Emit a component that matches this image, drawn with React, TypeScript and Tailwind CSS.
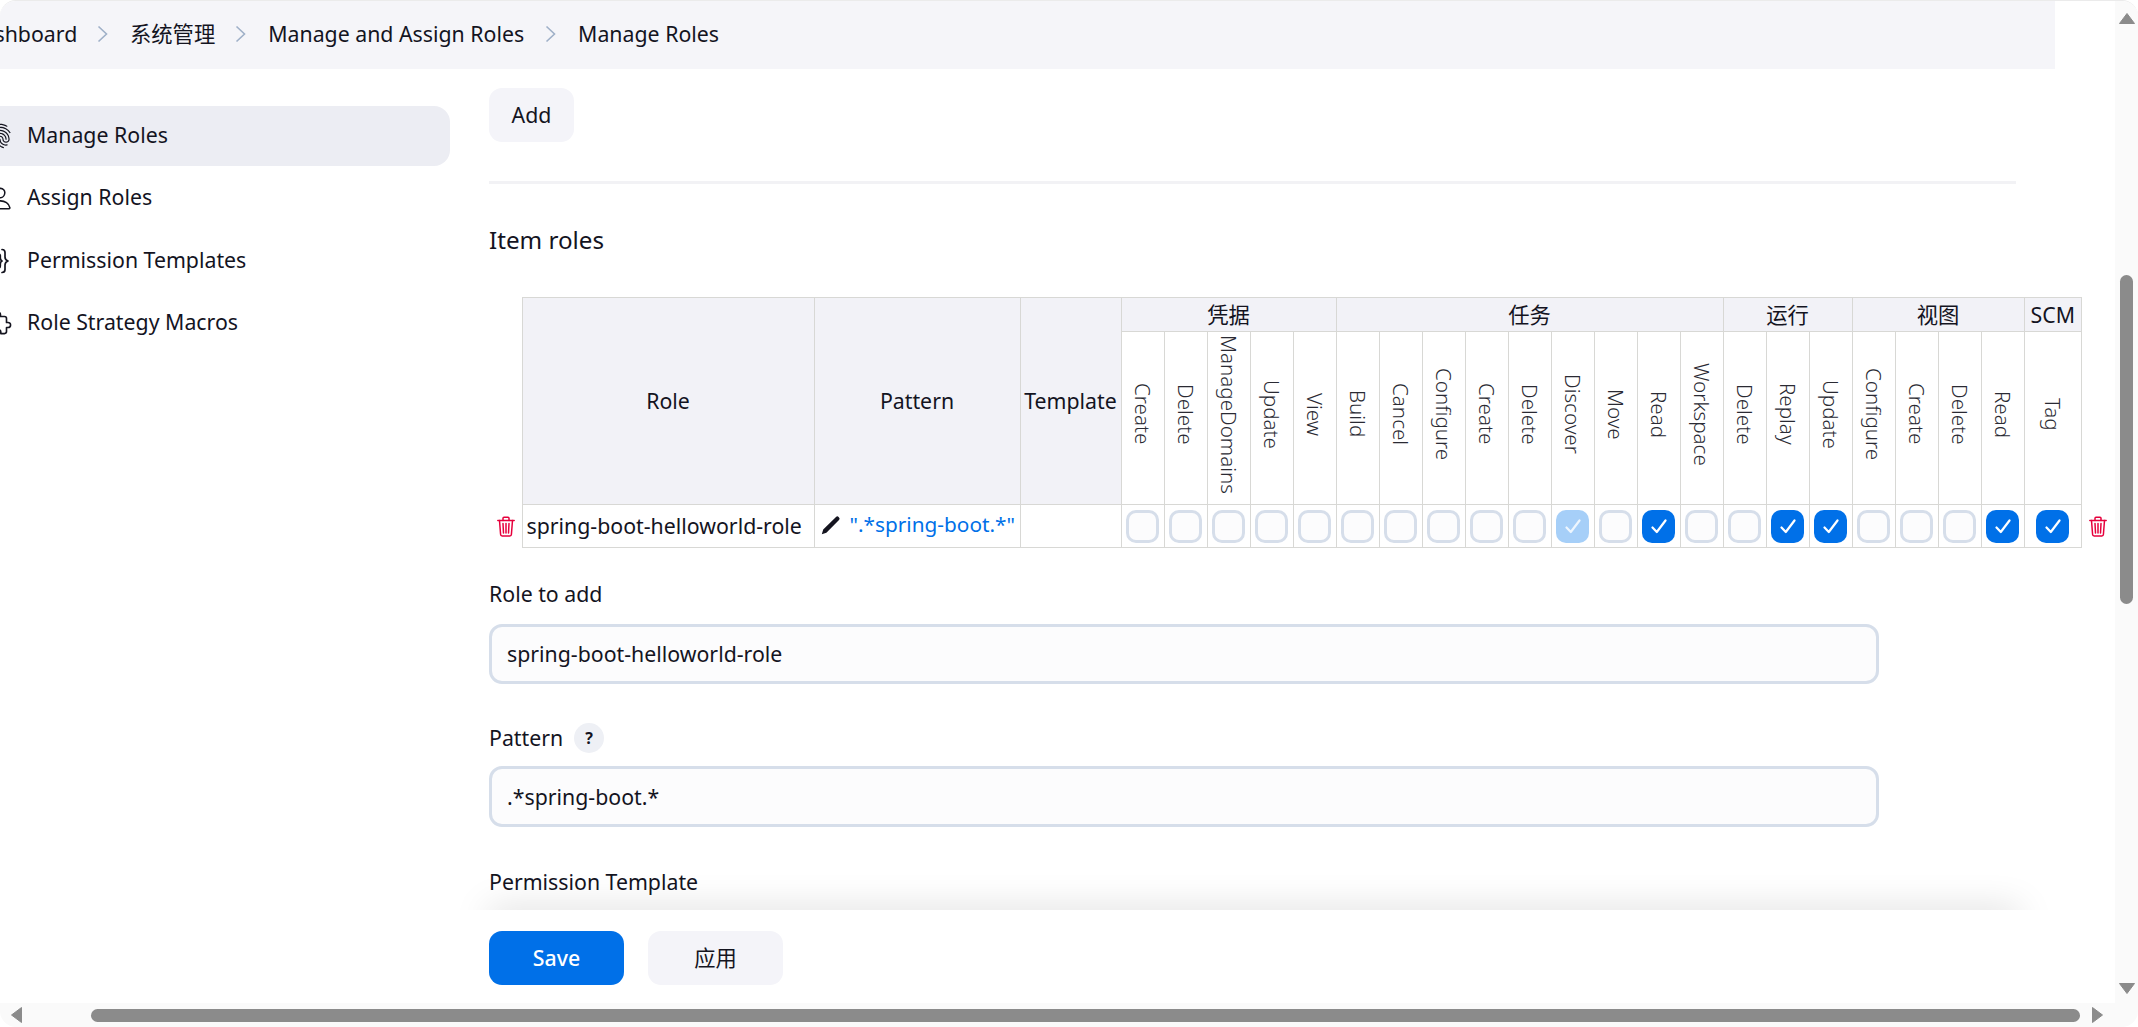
import React from "react";
import { IoFingerPrintOutline, IoPersonOutline, IoExtensionPuzzleOutline } from "react-icons/io5";

const font = "font-['Noto_Sans','Noto_Sans_CJK_SC',sans-serif]";

type Perm = { label: string; state?: "on" | "dim" };
const groups: { name: string; perms: Perm[] }[] = [
  { name: "凭据", perms: [{ label: "Create" }, { label: "Delete" }, { label: "ManageDomains" }, { label: "Update" }, { label: "View" }] },
  {
    name: "任务",
    perms: [
      { label: "Build" }, { label: "Cancel" }, { label: "Configure" }, { label: "Create" }, { label: "Delete" },
      { label: "Discover", state: "dim" }, { label: "Move" }, { label: "Read", state: "on" }, { label: "Workspace" },
    ],
  },
  { name: "运行", perms: [{ label: "Delete" }, { label: "Replay", state: "on" }, { label: "Update", state: "on" }] },
  { name: "视图", perms: [{ label: "Configure" }, { label: "Create" }, { label: "Delete" }, { label: "Read", state: "on" }] },
  { name: "SCM", perms: [{ label: "Tag", state: "on" }] },
];
const allPerms = groups.flatMap((g) => g.perms);

function Check({ state }: { state?: "on" | "dim" }) {
  if (!state) return <div className="w-[33px] h-[33px] mx-auto rounded-[10px] border-[3px] border-[#d6deea] bg-[#fcfcfd]" />;
  return (
    <div className={`w-[33px] h-[33px] mx-auto rounded-[10px] flex items-center justify-center ${state === "on" ? "bg-[#0070e8]" : "bg-[#a6cff8]"}`}>
      <svg width="16" height="15" viewBox="0 0 16 15" fill="none">
        <path d="M1.5 8.5 L5.8 13 L14.5 1.5" stroke="white" strokeOpacity={state === "on" ? 1 : 0.8} strokeWidth="2.2" strokeLinecap="round" strokeLinejoin="round" />
      </svg>
    </div>
  );
}

function Chevron() {
  return (
    <svg width="11" height="18" viewBox="0 0 11 18" fill="none" className="shrink-0">
      <path d="M1.5 1.5 L9.5 9 L1.5 16.5" stroke="#9fb0c8" strokeWidth="1.6" />
    </svg>
  );
}

function Trash({ className }: { className: string }) {
  return (
    <svg width="18" height="21" viewBox="0 0 18 21" fill="none" stroke="#e6003c" strokeWidth="1.5" strokeLinecap="round" strokeLinejoin="round" className={className}>
      <path d="M0.8 4.5H17.2" />
      <path d="M6 4.5V2.2a1 1 0 0 1 1-1h4a1 1 0 0 1 1 1V4.5" />
      <path d="M2.5 4.5L3.6 18.5a1.5 1.5 0 0 0 1.5 1.4h7.8a1.5 1.5 0 0 0 1.5-1.4L15.5 4.5" />
      <path d="M6 7.5L6.5 17M9 7.5V17M12 7.5L11.5 17" />
    </svg>
  );
}

function Pencil() {
  return (
    <svg width="20" height="20" viewBox="0 0 20 20" className="shrink-0">
      <path d="M0.8 19.2L2.2 14.6L15 2a1.8 1.8 0 0 1 2.6 0l0.4 0.4a1.8 1.8 0 0 1 0 2.6L5.4 17.8Z" fill="#14141f" />
    </svg>
  );
}

function BracesIcon() {
  return (
    <svg width="26" height="26" viewBox="0 0 26 26" fill="none" stroke="currentColor" strokeWidth="1.7" strokeLinecap="round" strokeLinejoin="round" className="ml-[-5px] shrink-0">
      <path d="M17 1.5c2.2 0 3 1 3 3V9c0 2 1 3.3 3 4-2 .7-3 2-3 4v4.5c0 2-.8 3-3 3" />
      <path d="M13.5 6c1.2 0 1.8.7 1.8 2v2c0 1.300.5 2.400 1.700 3-1.200.6-1.700 1.700-1.700 3v2c0 1.300-.6 2-1.800 2" />
    </svg>
  );
}

function SideItem({ icon, label, active }: { icon: React.ReactNode; label: string; active?: boolean }) {
  return (
    <div className={`h-[60px] ml-[-14px] flex items-center gap-[13px] rounded-r-[16px] text-[21.3px] ${active ? "bg-[#ecedf3]" : ""}`}>
      <span className="w-[28px] h-[28px] shrink-0 flex items-center justify-center">{icon}</span>
      <span className="pb-[2px]">{label}</span>
    </div>
  );
}

function Input({ value, h }: { value: string; h: string }) {
  return (
    <div className={`w-[1390px] ${h} rounded-[13px] border-[3px] border-[#d6deea] bg-[#fcfcfd] flex items-center pl-[15px] text-[21.3px]`}>
      {value}
    </div>
  );
}

export default function App() {
  return (
    <div className={`${font} w-[2138px] h-[1027px] flex flex-col overflow-hidden rounded-[16px] border-t border-[#ebebeb] bg-white text-[#14141f]`}>
      <div className="flex-1 min-h-0 flex">
        {/* page viewport */}
        <div className="w-[2115px] h-full flex flex-col overflow-hidden">
          <div className="w-[2055px] h-[68px] shrink-0 pb-[2px] bg-[#f5f5f9] flex items-center text-[21.3px] whitespace-nowrap">
            <span className="ml-[-33px] w-[110px] shrink-0 text-right">Dashboard</span>
            <span className="ml-[20px]"><Chevron /></span>
            <span className="ml-[22px]">系统管理</span>
            <span className="ml-[20px]"><Chevron /></span>
            <span className="ml-[22px]">Manage and Assign Roles</span>
            <span className="ml-[21px]"><Chevron /></span>
            <span className="ml-[22px]">Manage Roles</span>
          </div>

          <div className="flex-1 min-h-0 flex overflow-hidden">
            <div className="w-[450px] shrink-0 pt-[37px] flex flex-col gap-[2.4px]">
              <SideItem active label="Manage Roles" icon={<IoFingerPrintOutline size={26} />} />
              <SideItem label="Assign Roles" icon={<IoPersonOutline size={25} />} />
              <SideItem label="Permission Templates" icon={<BracesIcon />} />
              <SideItem label="Role Strategy Macros" icon={<IoExtensionPuzzleOutline size={26} />} />
            </div>

            <div className="ml-[39px] flex-1 min-w-0 pt-[19px]">
              <div className="w-[85px] h-[54px] rounded-[13px] bg-[#f4f4f9] flex items-center justify-center text-[21.3px]">Add</div>
              <div className="mt-[39px] w-[1527px] h-[3px] bg-[#f2f2f5]" />
              <div className="mt-[41px] h-[30px] flex items-center text-[24.2px]">Item roles</div>

              <table className="mt-[42px] table-fixed border-collapse w-[1616.5px] text-[21.3px]">
                <colgroup>
                  <col className="w-[33px]" />
                  <col className="w-[292px]" />
                  <col className="w-[206px]" />
                  <col className="w-[101px]" />
                  {allPerms.map((_, i) => (
                    <col key={i} className={i === 21 ? "w-[57.5px]" : "w-[43px]"} />
                  ))}
                  <col className="w-[24px]" />
                </colgroup>
                <thead>
                  <tr className="h-[34px]">
                    <th className="border-0" rowSpan={2} />
                    {["Role", "Pattern", "Template"].map((t) => (
                      <th key={t} rowSpan={2} className="border border-[#d8d8d5] bg-[#f2f2f7] font-normal p-0">{t}</th>
                    ))}
                    {groups.map((g) => (
                      <th key={g.name} colSpan={g.perms.length} className="border border-[#d8d8d5] bg-[#f2f2f7] font-normal p-0 leading-[1]">{g.name}</th>
                    ))}
                    <th className="border-0" rowSpan={2} />
                  </tr>
                  <tr className="h-[173px]">
                    {allPerms.map((p, i) => (
                      <th key={i} className="border border-[#d8d8d5] font-light p-0 text-[20.6px] text-[#2a2a33]">
                        <span className="[writing-mode:vertical-rl] inline-block leading-[1]">{p.label}</span>
                      </th>
                    ))}
                  </tr>
                </thead>
                <tbody>
                  <tr className="h-[43px]">
                    <td className="p-0">
                      <Trash className="ml-[8px]" />
                    </td>
                    <td className="border border-[#d8d8d5] p-0 pl-[4px] whitespace-nowrap overflow-hidden">spring-boot-helloworld-role</td>
                    <td className="border border-[#d8d8d5] p-0 pl-[6px] whitespace-nowrap overflow-hidden">
                      <span className="inline-flex items-center gap-[9px]">
                        <Pencil />
                        <span className="text-[#0070e8] text-[20.8px]">".*spring-boot.*"</span>
                      </span>
                    </td>
                    <td className="border border-[#d8d8d5] p-0" />
                    {allPerms.map((p, i) => (
                      <td key={i} className="border border-[#d8d8d5] p-0">
                        <Check state={p.state} />
                      </td>
                    ))}
                    <td className="p-0">
                      <Trash className="ml-[7px]" />
                    </td>
                  </tr>
                </tbody>
              </table>

              <div className="mt-[33px] h-[26px] flex items-center text-[21.3px]">Role to add</div>
              <div className="mt-[17px]"><Input value="spring-boot-helloworld-role" h="h-[60px]" /></div>
              <div className="mt-[39px] h-[30px] flex items-center gap-[11px] text-[21.3px]">
                <span>Pattern</span>
                <span className="w-[30px] h-[30px] rounded-full bg-[#eef0f5] flex items-center justify-center text-[16px] font-bold">?</span>
              </div>
              <div className="mt-[13px]"><Input value=".*spring-boot.*" h="h-[61px]" /></div>
              <div className="mt-[42px] h-[26px] flex items-center text-[21.3px]">Permission Template</div>
            </div>
          </div>

          {/* sticky app bar */}
          <div className="relative h-[93px] shrink-0 bg-white pl-[489px] pt-[21px] flex gap-[24px] text-[21.3px]">
            <div className="absolute left-0 right-0 bottom-full h-[45px] overflow-hidden pointer-events-none">
              <div className="absolute left-[489px] w-[1530px] top-full h-[20px] shadow-[0_0_36px_rgba(0,0,0,0.17)]" />
            </div>
            <div className="w-[135px] h-[54px] rounded-[13px] bg-[#0070e8] text-white font-medium flex items-center justify-center">Save</div>
            <div className="w-[135px] h-[54px] rounded-[13px] bg-[#f4f4f9] flex items-center justify-center">应用</div>
          </div>
        </div>

        {/* vertical scrollbar */}
        <div className="w-[23px] h-full bg-[#fafafa] flex flex-col items-center">
          <svg width="16" height="11" viewBox="0 0 16 11" className="mt-[12px] shrink-0"><path d="M8 0.5 L15.5 10.5 L0.5 10.5 Z" fill="#8b8b8b" stroke="#8b8b8b" strokeLinejoin="round" /></svg>
          <div className="mt-[251px] w-[13px] h-[329px] rounded-full bg-[#8b8b8b] shrink-0" />
          <svg width="16" height="11" viewBox="0 0 16 11" className="mt-[379px] shrink-0"><path d="M8 10.5 L15.5 0.5 L0.5 0.5 Z" fill="#8b8b8b" stroke="#8b8b8b" strokeLinejoin="round" /></svg>
        </div>
      </div>

      {/* horizontal scrollbar */}
      <div className="h-[24px] shrink-0 bg-[#fafafa] flex items-center">
        <svg width="11" height="16" viewBox="0 0 11 16" className="ml-[11px] shrink-0"><path d="M0.5 8 L10.5 0.5 L10.5 15.5 Z" fill="#8b8b8b" stroke="#8b8b8b" strokeLinejoin="round" /></svg>
        <div className="ml-[69px] w-[1989px] h-[13px] rounded-full bg-[#8b8b8b] shrink-0" />
        <svg width="11" height="16" viewBox="0 0 11 16" className="ml-[12px] shrink-0"><path d="M10.5 8 L0.5 0.5 L0.5 15.5 Z" fill="#8b8b8b" stroke="#8b8b8b" strokeLinejoin="round" /></svg>
      </div>
    </div>
  );
}
